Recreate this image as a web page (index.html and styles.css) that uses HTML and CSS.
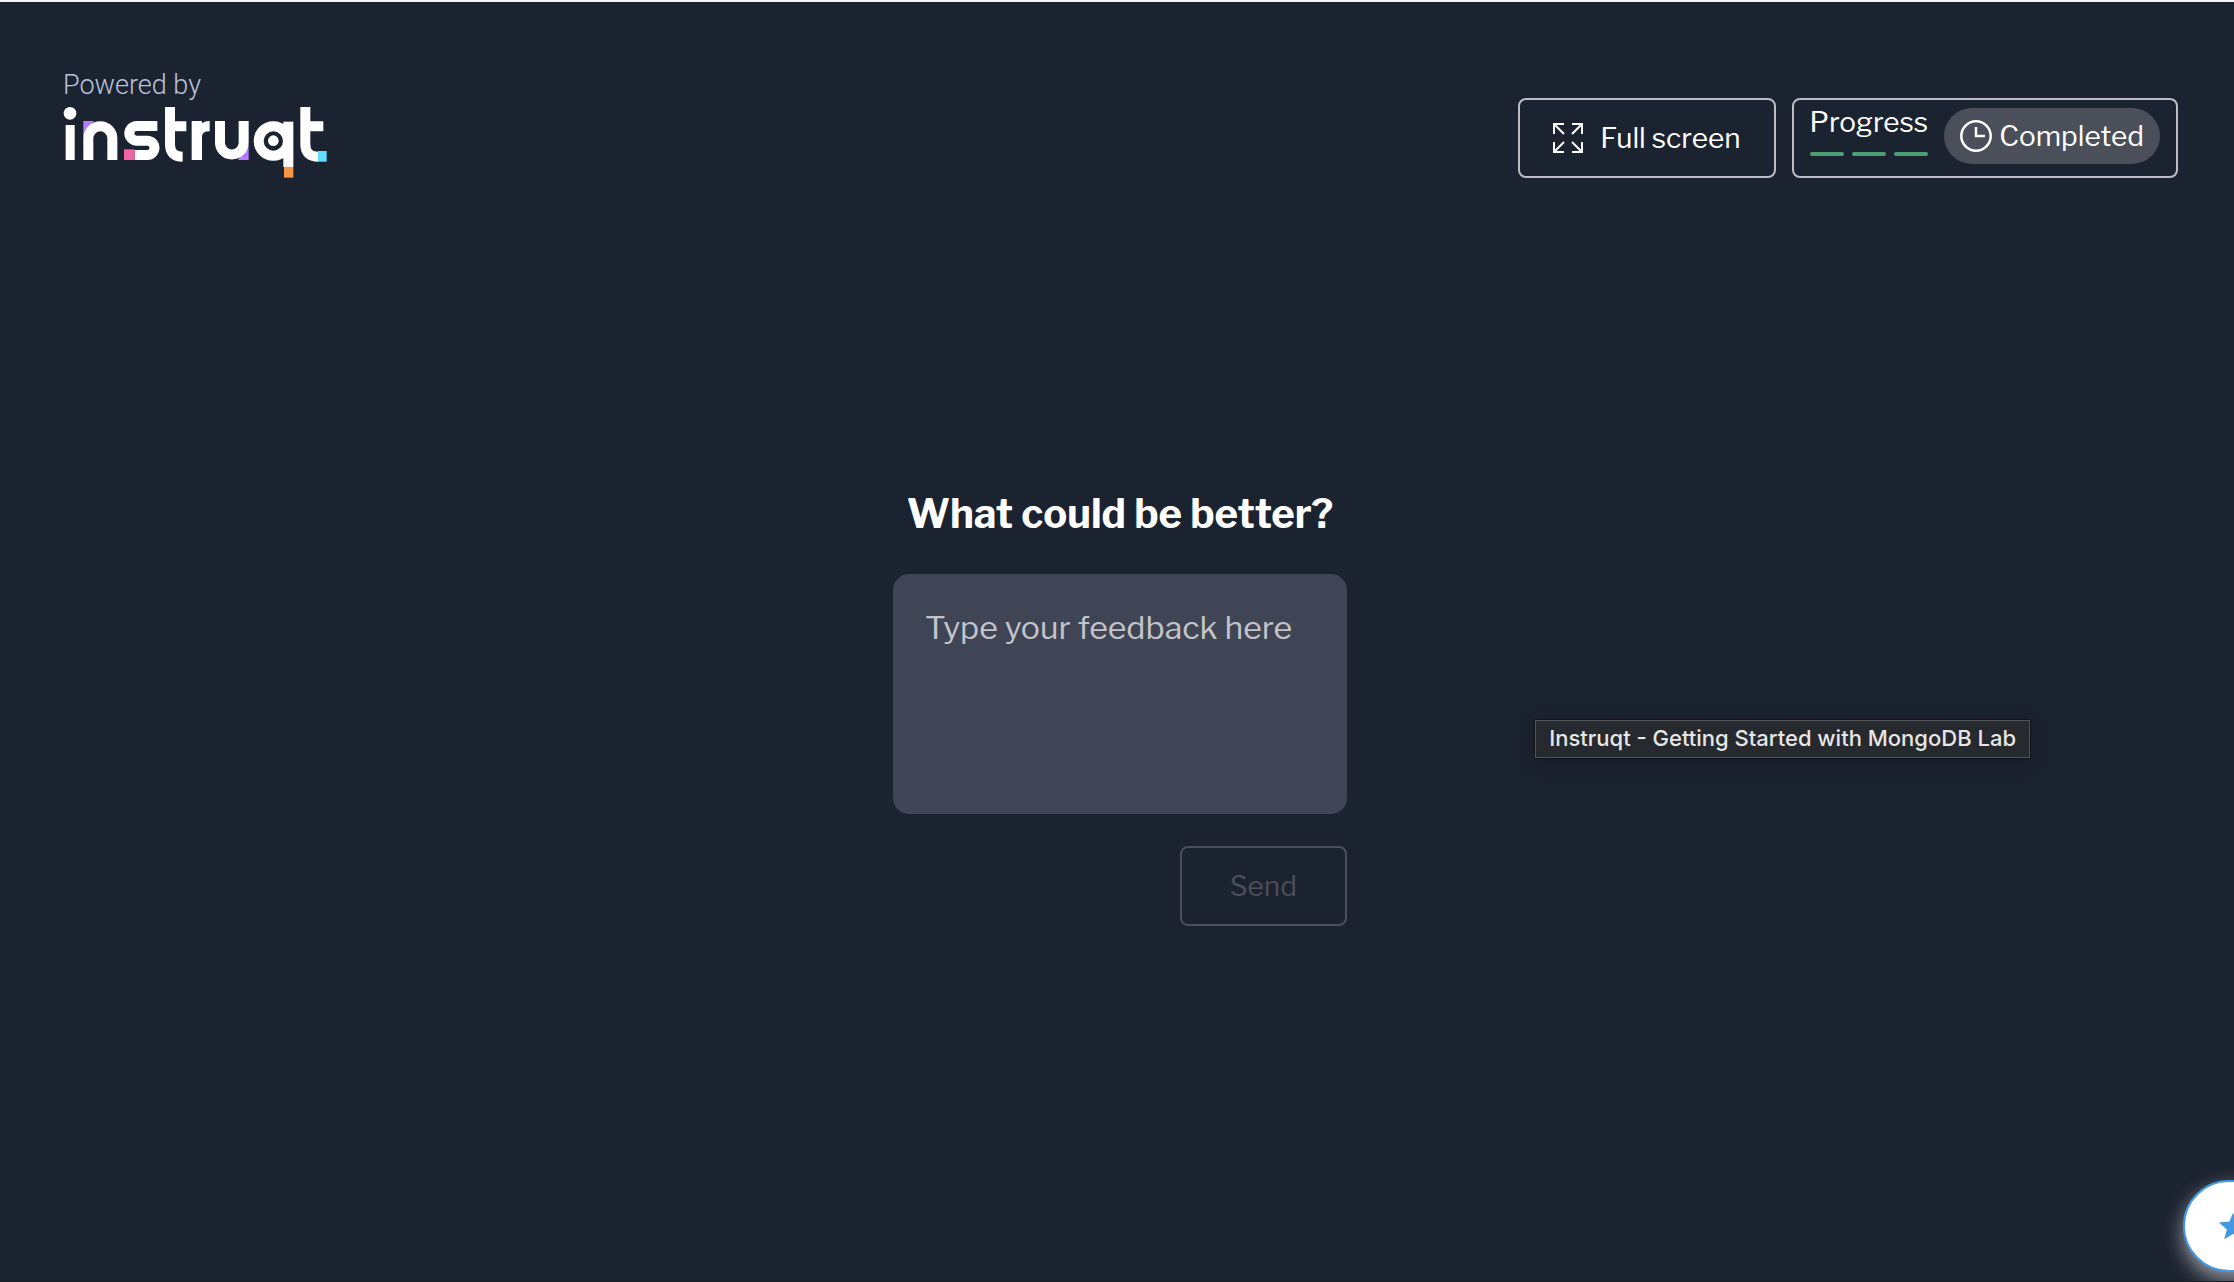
FILE: index.html
```html
<!DOCTYPE html>
<html lang="en">
<head>
<meta charset="utf-8">
<title>Instruqt - Getting Started with MongoDB Lab</title>
<link rel="stylesheet" href="styles.css">
</head>
<body>
<div class="page">
  <header class="header">
    <div class="brand">
      <span class="brand-caption">Powered by</span>
      <svg class="brand-logo" viewBox="40 138 792 216" role="img" aria-label="instruqt">
        <path fill="#b57bfa" d="M101 183h32l-32 46zM597 300h-32l32-46z"/>
        <g fill="#fff">
          <circle cx="61" cy="160" r="19"/>
          <rect x="48" y="195" width="27" height="105"/>
          <rect x="426" y="183" width="31" height="117"/>
          <path d="M457 190q8-7 23-7v31q-23 0-23 16z"/>
          <circle cx="671" cy="242" r="16"/>
          <rect x="701" y="185" width="30" height="136"/>
        </g>
        <g fill="none" stroke="#fff" stroke-width="30">
          <path d="M116 300v-65a36 36 0 0 1 72 0v65"/>
          <path d="M323 198h-62a22 22 0 0 0 0 44h32a21 21 0 0 1 0 43h-38"/>
          <path d="M361 141v112q0 37 38 37M361 199h49"/>
          <path d="M511 183v65a35 35 0 0 0 71 0v-65"/>
          <circle cx="671" cy="243" r="44"/>
          <path d="M767 141v112q0 37 39 37M767 199h54"/>
        </g>
        <path fill="#f263a6" d="M223 268h32v32h-32z"/>
        <path fill="#f79646" d="M703 321h28v32h-28z"/>
        <path fill="#63defc" d="M805 273h26v32h-26z"/>
      </svg>
    </div>
    <div class="toolbar">
      <button class="button" type="button">
        <svg class="icon-expand" viewBox="0 0 30 30" fill="none" stroke="currentColor" stroke-width="2" aria-hidden="true">
          <path d="M1 11V1h10M1 1l10 10M19 1h10v10M29 1L19 11M1 19v10h10M1 29l10-10M19 29h10V19M29 29L19 19"/>
        </svg>
        Full screen
      </button>
      <div class="progress">
        <div class="progress-steps">
          <span>Progress</span>
          <div class="bars"><i class="bar"></i><i class="bar"></i><i class="bar"></i></div>
        </div>
        <div class="pill">
          <svg class="icon-clock" viewBox="0 0 32 32" fill="none" stroke="currentColor" stroke-width="2.5" aria-hidden="true">
            <circle cx="16" cy="16" r="14.7"/><path d="M16 7v9h9"/>
          </svg>
          Completed
        </div>
      </div>
    </div>
  </header>
  <main class="main">
    <form class="feedback">
      <label class="title" for="feedback">What could be better?</label>
      <textarea class="field" id="feedback" placeholder="Type your feedback here"></textarea>
      <button class="button send" type="button" disabled>Send</button>
    </form>
  </main>
  <div class="tooltip" role="tooltip">Instruqt - Getting Started with MongoDB Lab</div>
  <button class="fab" type="button" aria-label="Favorites">
    <svg class="icon-star" viewBox="0 0 34 32" fill="currentColor" aria-hidden="true">
      <path d="M17 1l4 10 12 1-9 8 3 11-10-6-10 6 3-11-9-8 12-1z"/>
    </svg>
  </button>
</div>
</body>
</html>
```
FILE: styles.css
```css
* { box-sizing: border-box; }
body {
  margin: 0;
  background: #1c2330;
  color: #fff;
  font-family: "Libre Franklin", "Liberation Sans", Arial, sans-serif;
  font-size: 28px;
}
button, textarea { font: inherit; color: inherit; }
.page {
  position: relative;
  min-height: 100vh;
  display: flex;
  flex-direction: column;
  border-top: 2px solid #f4f4f4;
  border-bottom: 1px solid #1e1b29;
  overflow: hidden;
}
.header {
  display: flex;
  justify-content: space-between;
  align-items: flex-end;
  padding: 66px 56px 0 63px;
}
.brand { display: flex; flex-direction: column; }
.brand-caption {
  font-family: Roboto, sans-serif;
  font-weight: 300;
  font-size: 27px;
  line-height: 34px;
  color: #b8c2dc;
  margin-bottom: 4px;
}
.brand-logo { width: 264px; height: 72px; }
.toolbar { display: flex; gap: 16px; }
.button {
  display: flex;
  align-items: center;
  gap: 17px;
  height: 80px;
  padding: 0 33px;
  border: 2px solid #bbbdc1;
  border-radius: 8px;
  background: none;
}
.icon-expand { width: 30px; height: 30px; }
.progress {
  display: flex;
  gap: 16px;
  height: 80px;
  padding: 8px 16px;
  border: 2px solid #bbbdc1;
  border-radius: 8px;
}
.progress-steps { line-height: 28px; }
.bars { display: flex; gap: 8px; margin-top: 16px; }
.bar { width: 34px; height: 4px; border-radius: 2px; background: #4c9f73; }
.pill {
  display: flex;
  align-items: center;
  gap: 7px;
  height: 56px;
  padding: 0 16px;
  border-radius: 28px;
  background: #4b4f59;
}
.icon-clock { width: 32px; height: 32px; }
.main {
  flex: 1;
  display: flex;
  justify-content: center;
  align-items: flex-start;
  padding: 308px 0 32px 6px;
}
.feedback { width: 454px; display: flex; flex-direction: column; }
.title {
  font-size: 40px;
  font-weight: 700;
  line-height: 56px;
  text-align: center;
  white-space: nowrap;
  margin-bottom: 32px;
}
.field {
  height: 240px;
  padding: 32px;
  border: 0;
  border-radius: 16px;
  background: #404556;
  font-size: 32px;
  line-height: 44px;
  resize: none;
}
.field::placeholder { color: #c3c4ca; opacity: 1; }
.send {
  align-self: flex-end;
  margin-top: 32px;
  padding: 0 48px;
  border-color: #4b4f59;
  color: #4b4f59;
}
.tooltip {
  position: absolute;
  top: 718px;
  right: 204px;
  padding: 0 13px 2px;
  border: 1px solid #505457;
  outline: 1px solid #10141b;
  background: #26292d;
  color: #e6e6e6;
  font-family: Inter, sans-serif;
  font-size: 22px;
  font-weight: 500;
  line-height: 34px;
  white-space: nowrap;
  box-shadow: 0 4px 20px #0004;
}
.fab {
  position: absolute;
  right: -49px;
  bottom: 9px;
  display: flex;
  align-items: center;
  justify-content: center;
  width: 100px;
  height: 92px;
  padding: 0;
  border: 2px solid #4299e1;
  border-radius: 46px;
  background: #fff;
  color: #4299e1;
  box-shadow: 0 8px 20px #fff8;
}
.icon-star { width: 30px; height: 30px; }
```
